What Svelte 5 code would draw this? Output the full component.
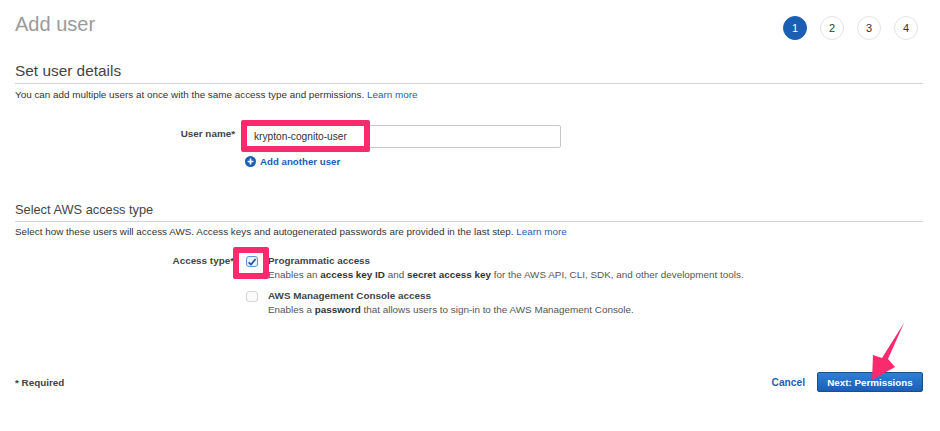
<script lang="ts">
  const steps = [1, 2, 3, 4];
  let username = $state('krypton-cognito-user');
</script>

<div class="page">
  <header class="top">
    <h1>Add user</h1>
    <ol class="steps">
      {#each steps as step}
        <li class:active={step === 1}>{step}</li>
      {/each}
    </ol>
  </header>

  <section class="details">
    <h2>Set user details</h2>
    <p class="hint">You can add multiple users at once with the same access type and permissions. <a href="#learn">Learn more</a></p>

    <div class="name-row">
      <span class="label">User name*</span>
      <div class="name-field">
        <div class="input-wrap">
          <input type="text" bind:value={username} spellcheck="false" />
          <span class="mark mark-name"></span>
        </div>
        <a class="add-user" href="#add">
          <svg width="11" height="11" viewBox="0 0 11 11">
            <circle cx="5.5" cy="5.5" r="5.5" fill="#1a5fb4" />
            <path d="M5.5 2.6V8.4M2.6 5.5H8.4" stroke="#fff" stroke-width="1.7" />
          </svg>
          Add another user
        </a>
      </div>
    </div>
  </section>

  <section class="access">
    <h2>Select AWS access type</h2>
    <p class="hint">Select how these users will access AWS. Access keys and autogenerated passwords are provided in the last step. <a href="#learn">Learn more</a></p>

    <div class="access-row">
      <span class="label">Access type*</span>
      <div class="options">
        <div class="option">
          <span class="box checked">
            <svg width="12" height="12" viewBox="0 0 12 12" fill="none">
              <path d="M2.6 6.4L5 8.6L9.6 3" stroke="#174f9c" stroke-width="1.6" />
            </svg>
            <span class="mark mark-check"></span>
          </span>
          <div>
            <div class="opt-title">Programmatic access</div>
            <div class="opt-desc">Enables an <b>access key ID</b> and <b>secret access key</b> for the AWS API, CLI, SDK, and other development tools.</div>
          </div>
        </div>
        <div class="option">
          <span class="box"></span>
          <div>
            <div class="opt-title">AWS Management Console access</div>
            <div class="opt-desc">Enables a <b>password</b> that allows users to sign-in to the AWS Management Console.</div>
          </div>
        </div>
      </div>
    </div>
  </section>

  <footer class="bottom">
    <span class="required">* Required</span>
    <div class="actions">
      <a class="cancel" href="#cancel">Cancel</a>
      <div class="next-wrap">
        <button class="next">Next: Permissions</button>
        <svg class="arrow" width="40" height="64" viewBox="0 0 40 64">
          <path d="M37 1L21 37L28 45L5 58L6 33L15 36Z" fill="#f92a6d" />
        </svg>
      </div>
    </div>
  </footer>
</div>

<style>
  :global(body) {
    margin: 0;
    background: #fff;
  }

  .page {
    box-sizing: border-box;
    width: 940px;
    height: 431px;
    padding: 0 17px 0 15px;
    font-family: 'Liberation Sans', Arial, sans-serif;
    font-size: 9.9px;
    color: #444;
    overflow: hidden;
  }

  .top {
    display: flex;
    justify-content: space-between;
    height: 61px;
    padding-top: 12px;
    box-sizing: border-box;
  }

  h1 {
    margin: 0;
    font-size: 20px;
    font-weight: 400;
    line-height: 24px;
    color: #9a9a9a;
  }

  .steps {
    display: flex;
    gap: 13px;
    margin: 4px 5px 0 0;
    padding: 0;
    list-style: none;
  }

  .steps li {
    box-sizing: border-box;
    width: 24px;
    height: 24px;
    border: 1px solid #e3e3e3;
    border-radius: 50%;
    font-size: 11px;
    line-height: 22px;
    text-align: center;
    color: #333;
  }

  .steps li.active {
    background: #1a5fb4;
    border-color: #1a5fb4;
    color: #fff;
  }

  h2 {
    margin: 0;
    padding-bottom: 3px;
    border-bottom: 1px solid #d5d5d5;
    font-size: 15.4px;
    font-weight: 400;
    line-height: 19px;
    color: #444;
  }

  .access h2 {
    font-size: 12.8px;
    line-height: 16px;
  }

  .hint {
    margin: 4px 0 0;
    line-height: 13px;
    color: #333;
  }

  .access .hint {
    margin-top: 3px;
  }

  a {
    color: #1a5fb4;
    text-decoration: none;
  }

  .name-row {
    display: flex;
    margin-top: 24px;
  }

  .label {
    width: 220px;
    text-align: right;
    font-weight: 700;
    color: #444;
  }

  .name-row .label {
    padding-top: 3px;
  }

  .name-field {
    margin-left: 8px;
  }

  .input-wrap {
    position: relative;
    width: 318px;
    height: 23px;
  }

  input {
    box-sizing: border-box;
    width: 100%;
    height: 100%;
    padding: 0 10px;
    border: 1px solid #c8c8c8;
    border-radius: 2px;
    outline: none;
    font-family: inherit;
    font-size: 10.2px;
    color: #333;
  }

  .mark {
    position: absolute;
    box-sizing: border-box;
    border: 6px solid #f92a6d;
    border-radius: 2px;
  }

  .mark-name {
    left: -2px;
    top: -5px;
    width: 129px;
    height: 32px;
  }

  .add-user {
    display: flex;
    align-items: center;
    gap: 4px;
    margin: 7px 0 0 2px;
    font-weight: 700;
    line-height: 13px;
    font-size: 9.7px;
  }

  .access {
    margin-top: 34px;
  }

  .access-row {
    display: flex;
    margin-top: 16px;
  }

  .access-row .label {
    width: 219px;
    line-height: 13px;
  }

  .options {
    display: flex;
    flex-direction: column;
    gap: 7px;
    margin-left: 12px;
  }

  .option {
    display: flex;
    gap: 10px;
  }

  .box {
    position: relative;
    box-sizing: border-box;
    flex: none;
    width: 12px;
    height: 11px;
    margin-top: 2px;
    border: 1px solid #d5d5d5;
    border-radius: 3px;
    background: #fbfbfb;
  }

  .box.checked {
    border-color: #5b93dc;
    background: #eaf2fc;
  }

  .box svg {
    position: absolute;
    left: -1px;
    top: -1px;
  }

  .mark-check {
    left: -14px;
    top: -10px;
    width: 36px;
    height: 32px;
  }

  .opt-title {
    font-weight: 700;
    line-height: 14px;
    color: #444;
  }

  .opt-desc {
    line-height: 14px;
    color: #555;
  }

  .opt-desc b {
    color: #333;
  }

  .bottom {
    display: flex;
    justify-content: space-between;
    align-items: center;
    margin-top: 55px;
  }

  .required {
    font-weight: 700;
    color: #444;
  }

  .actions {
    display: flex;
    align-items: center;
    gap: 12px;
  }

  .cancel {
    font-weight: 700;
    font-size: 10.2px;
  }

  .next-wrap {
    position: relative;
  }

  .next {
    display: block;
    box-sizing: border-box;
    width: 106px;
    height: 20px;
    padding: 0;
    border: 1px solid #15508f;
    border-radius: 2px;
    background: linear-gradient(#2f7fd8, #1a5fb4);
    font-family: inherit;
    font-size: 9.8px;
    font-weight: 700;
    color: #fff;
  }

  .arrow {
    position: absolute;
    left: 50px;
    top: -50px;
  }
</style>
